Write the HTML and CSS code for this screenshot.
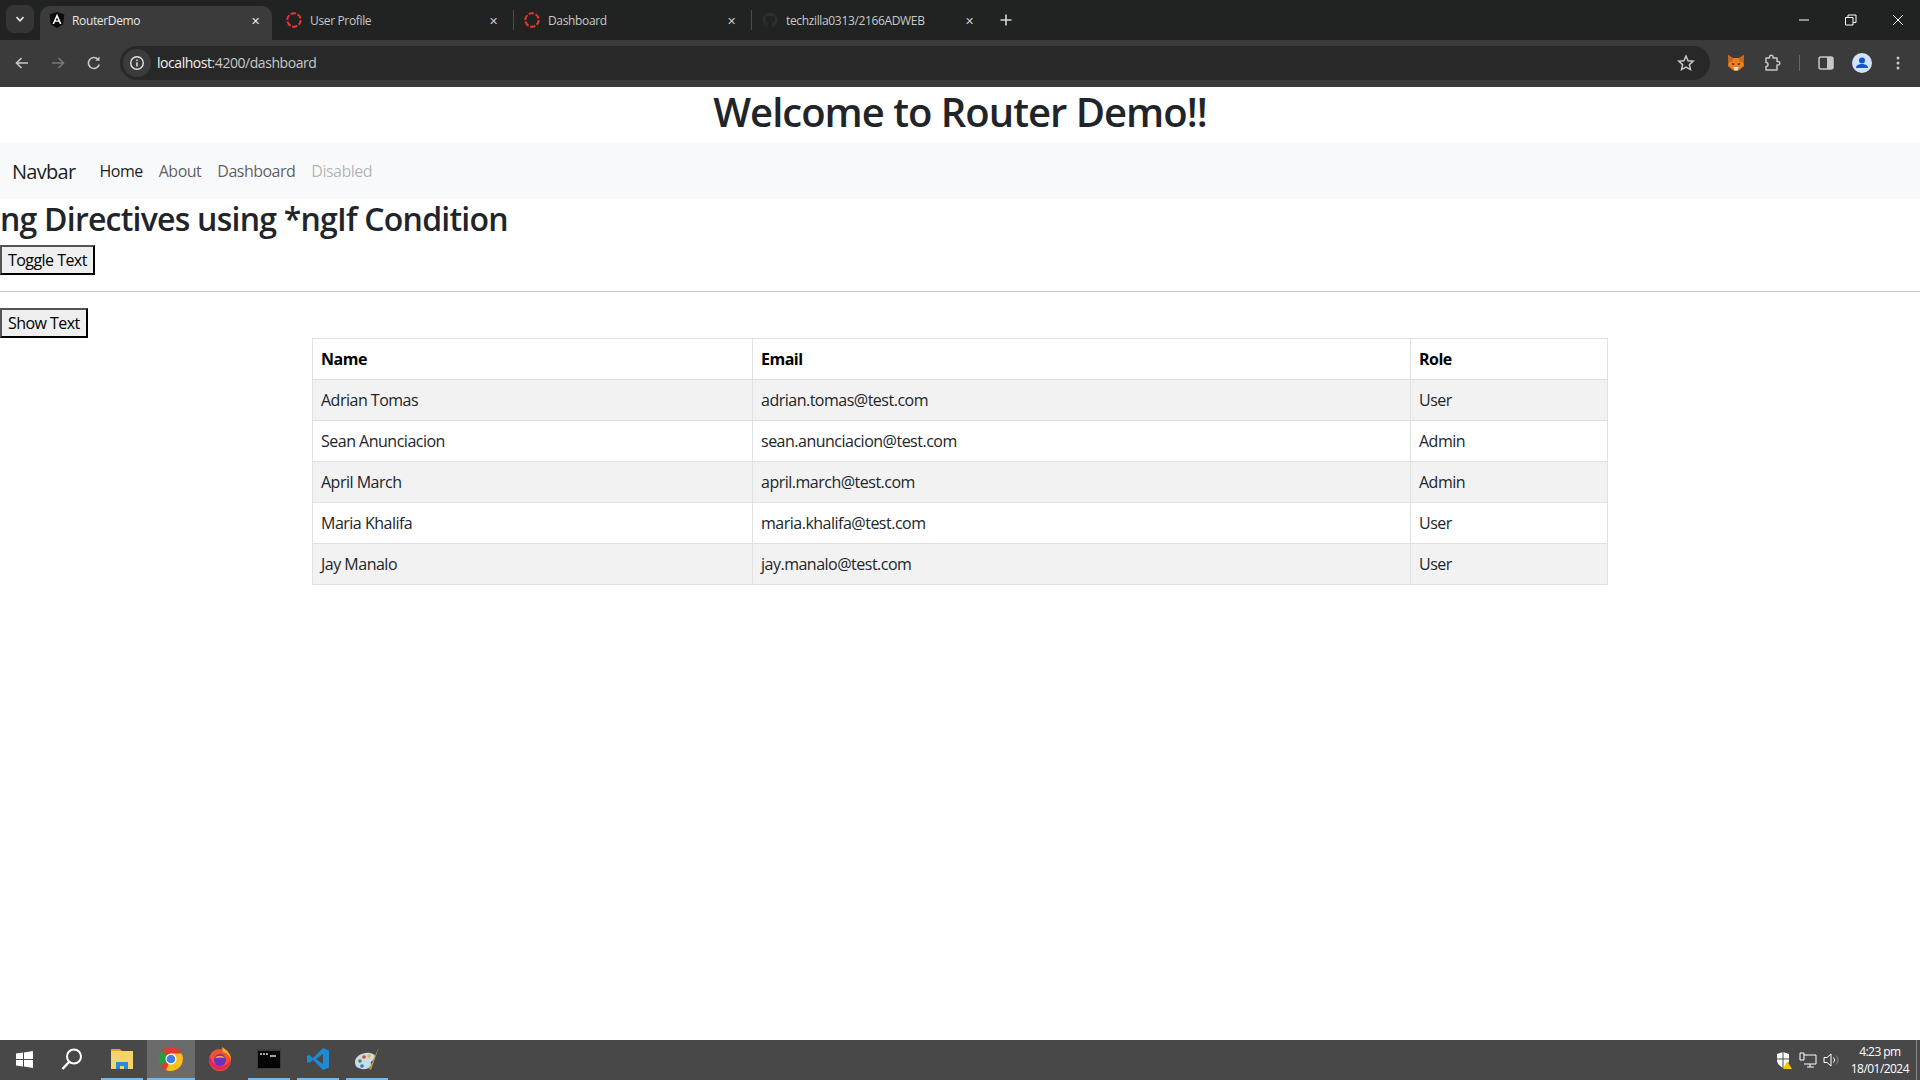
FILE: index.html
```html
<!DOCTYPE html>
<html lang="en">
<head>
    <meta charset="UTF-8">
    <title>RouterDemo</title>
    <link rel="stylesheet" href="styles.css">
</head>
<body>
    <!-- browser tabs -->
    <div class="tab_strip">
        <div class="tab_search">
            <svg width="12" height="12" viewBox="0 0 12 12"><path d="M2.500 4.200 6 7.800l3.500-3.600" fill="none" stroke="#e3e3e3" stroke-width="1.700"/></svg>
        </div>
        <div class="tab tab_active">
            <svg class="favicon" viewBox="0 0 16 16"><path d="M8 0 .7 2.600l1.100 9.700L8 16l6.200-3.700 1.100-9.700z" fill="#0b0b0f"/><path d="M8 1.800 3.500 12h1.700l.9-2.300h3.800l.9 2.300h1.700zm0 3.700 1.300 3H6.700z" fill="#fff"/></svg>
            <span class="tab_title">RouterDemo</span>
            <span class="tab_close">✕</span>
        </div>
        <div class="tab tab_second">
            <svg class="favicon" viewBox="0 0 16 16"><circle cx="8" cy="8" r="6.700" fill="none" stroke="#e8372c" stroke-width="2" stroke-dasharray="5.300 1.700"/></svg>
            <span class="tab_title">User Profile</span>
            <span class="tab_close">✕</span>
        </div>
        <div class="tab tab_divided">
            <svg class="favicon" viewBox="0 0 16 16"><circle cx="8" cy="8" r="6.700" fill="none" stroke="#e8372c" stroke-width="2" stroke-dasharray="5.300 1.700"/></svg>
            <span class="tab_title">Dashboard</span>
            <span class="tab_close">✕</span>
        </div>
        <div class="tab tab_divided">
            <svg class="favicon" viewBox="0 0 16 16"><path d="M8 .5a7.500 7.500 0 0 0-2.400 14.600c.4.100.5-.2.5-.4v-1.300c-2.100.4-2.600-1-2.600-1-.4-.9-.9-1.200-.9-1.200-.7-.5.100-.5.100-.5.800.100 1.200.8 1.200.8.700 1.200 1.800.9 2.200.7.100-.5.300-.9.500-1.100-1.700-.2-3.400-.8-3.400-3.700 0-.8.300-1.500.8-2-.1-.2-.3-1 .1-2 0 0 .6-.2 2.100.8a7 7 0 0 1 3.800 0c1.500-1 2.100-.8 2.100-.8.400 1 .2 1.800.1 2 .5.500.8 1.200.8 2 0 2.900-1.800 3.500-3.400 3.700.3.200.5.700.5 1.400v2.100c0 .2.100.5.500.4A7.500 7.500 0 0 0 8 .5z" fill="#2a2f36"/></svg>
            <span class="tab_title">techzilla0313/2166ADWEB</span>
            <span class="tab_close">✕</span>
        </div>
        <div class="new_tab">
            <svg width="14" height="14" viewBox="0 0 14 14"><path d="M7 1.500v11M1.500 7h11" stroke="#d5d5d5" stroke-width="1.600"/></svg>
        </div>
        <div class="window_controls">
            <svg width="12" height="12" viewBox="0 0 12 12"><path d="M1 6h10" stroke="#fff"/></svg>
            <svg width="12" height="12" viewBox="0 0 12 12"><path d="M.5 3.500h7.500v7.500H.5zM3 3.500V1h8v7.500H8" fill="none" stroke="#fff"/></svg>
            <svg width="12" height="12" viewBox="0 0 12 12"><path d="M1 1l10 10M11 1 1 11" stroke="#fff"/></svg>
        </div>
    </div>

    <!-- address bar -->
    <div class="toolbar">
        <svg class="tool_icon" viewBox="0 0 16 16"><path d="M14 8H3M7.500 3 2.500 8l5 5" fill="none" stroke="#c7c7c7" stroke-width="1.600"/></svg>
        <svg class="tool_icon" viewBox="0 0 16 16"><path d="M2 8h11M8.500 3l5 5-5 5" fill="none" stroke="#777" stroke-width="1.600"/></svg>
        <svg class="tool_icon" viewBox="0 0 16 16"><path d="M13.200 9.500A5.500 5.500 0 1 1 12 4.300" fill="none" stroke="#c7c7c7" stroke-width="1.600"/><path d="M13.500 1.500v4.300H9.200z" fill="#c7c7c7"/></svg>
        <div class="url_bar">
            <span class="site_info">
                <svg width="16" height="16" viewBox="0 0 16 16"><circle cx="8" cy="8" r="6.300" fill="none" stroke="#e3e3e3" stroke-width="1.400"/><path d="M8 7.200v4.300M8 4.400v1.500" stroke="#e3e3e3" stroke-width="1.500"/></svg>
            </span>
            <span class="url_text"><span class="url_host">localhost</span>:4200/dashboard</span>
            <svg class="star" width="18" height="18" viewBox="0 0 18 18"><path d="m9 2 2.100 4.700 5.100.5-3.800 3.400 1.100 5L9 13l-4.500 2.600 1.100-5-3.800-3.400 5.100-.5z" fill="none" stroke="#c7c7c7" stroke-width="1.500"/></svg>
        </div>
        <div class="extensions">
            <svg width="18" height="18" viewBox="0 0 18 18"><path d="M1 1l5 3h6l5-3-.5 7 .5 4-3.500 3-2.500 1.500H7L4.500 15 1 12l.5-4z" fill="#ef7f1f"/><path d="M1 1l5 3-.5 3.500-4 .5zM17 1l-5 3 .5 3.500 4 .5z" fill="#c9651a"/><path d="M6.500 13h5L10.500 16.500h-3z" fill="#f3e2d0"/><path d="M5 9l2.500.8L6 11.500zM13 9l-2.500.8L12 11.500z" fill="#2b2118"/></svg>
            <svg width="18" height="18" viewBox="0 0 18 18"><path d="M3 4h3.500V3a1.800 1.800 0 0 1 3.600 0v1H14v3.500h1a1.800 1.800 0 0 1 0 3.600h-1V16H3v-3.500a2 2 0 0 0 0-4z" fill="none" stroke="#c7c7c7" stroke-width="1.500" stroke-linejoin="round"/></svg>
            <span class="tool_divider"></span>
            <svg width="16" height="16" viewBox="0 0 16 16"><rect x="1" y="2" width="14" height="12" rx="2" fill="none" stroke="#c7c7c7" stroke-width="1.500"/><rect x="9" y="2" width="6" height="12" fill="#c7c7c7"/></svg>
            <svg width="20" height="20" viewBox="0 0 20 20"><circle cx="10" cy="10" r="10" fill="#d3e3fd"/><circle cx="10" cy="7.500" r="3" fill="#0b57d0"/><path d="M4 15c0-3 3-4 6-4s6 1 6 4z" fill="#0b57d0"/></svg>
            <svg width="16" height="16" viewBox="0 0 16 16"><circle cx="8" cy="3" r="1.500" fill="#c7c7c7"/><circle cx="8" cy="8" r="1.500" fill="#c7c7c7"/><circle cx="8" cy="13" r="1.500" fill="#c7c7c7"/></svg>
        </div>
    </div>

    <!-- the app itself -->
    <main class="page">
        <h1>Welcome to Router Demo!!</h1>
        <nav class="navbar">
            <a class="navbar_brand">Navbar</a>
            <a class="nav_link nav_active">Home</a>
            <a class="nav_link">About</a>
            <a class="nav_link">Dashboard</a>
            <a class="nav_link nav_disabled">Disabled</a>
        </nav>
        <h2>ng Directives using *ngIf Condition</h2>
        <button>Toggle Text</button>
        <hr>
        <button>Show Text</button>
        <div class="table_wrap">
            <table>
                <thead>
                    <tr>
                        <th class="col_name">Name</th>
                        <th class="col_email">Email</th>
                        <th>Role</th>
                    </tr>
                </thead>
                <tbody>
                    <tr><td>Adrian Tomas</td><td>adrian.tomas@test.com</td><td>User</td></tr>
                    <tr><td>Sean Anunciacion</td><td>sean.anunciacion@test.com</td><td>Admin</td></tr>
                    <tr><td>April March</td><td>april.march@test.com</td><td>Admin</td></tr>
                    <tr><td>Maria Khalifa</td><td>maria.khalifa@test.com</td><td>User</td></tr>
                    <tr><td>Jay Manalo</td><td>jay.manalo@test.com</td><td>User</td></tr>
                </tbody>
            </table>
        </div>
    </main>

    <!-- windows taskbar -->
    <footer class="taskbar">
        <div class="task_item task_start">
            <svg width="17" height="17" viewBox="0 0 17 17"><path d="M0 2.500 7 1.500v6.500H0zM8 1.400 17 0v8H8zM0 9h7v6.500L0 14.500zM8 9h9v8l-9-1.400z" fill="#fff"/></svg>
        </div>
        <div class="task_item task_search">
            <svg width="24" height="24" viewBox="0 0 24 24"><circle cx="14" cy="9.500" r="7" fill="none" stroke="#fff" stroke-width="2"/><path d="M9 15 2.500 22" stroke="#fff" stroke-width="2.400"/></svg>
        </div>
        <div class="task_item task_open task_explorer">
            <svg width="24" height="22" viewBox="0 0 24 22"><path d="M1 1h9l2 2H1z" fill="#e0a526"/><rect x="1" y="3" width="22" height="18" fill="#f7d36b"/><path d="M6 21v-7h12v7h-4v-3h-4v3z" fill="#2a8ad4"/></svg>
        </div>
        <div class="task_item task_active">
            <svg width="24" height="24" viewBox="0 0 24 24"><circle cx="12" cy="12" r="12" fill="#dd3b31"/><path d="M12 12 1.600 18A12 12 0 0 1 3 4z" fill="#1fa045"/><path d="M12 12h11.900A12 12 0 0 1 7 23z" fill="#f6c21a"/><path d="M12 6.500h10.600A12 12 0 0 1 24 12H12z" fill="#f6c21a"/><circle cx="12" cy="12" r="5.500" fill="#fff"/><circle cx="12" cy="12" r="4.300" fill="#3d7fe6"/></svg>
        </div>
        <div class="task_item">
            <svg width="24" height="24" viewBox="0 0 24 24"><circle cx="12" cy="13" r="11" fill="#f0542d"/><path d="M14 0c5 3 9 7 9 13-1-4-4-7-8-8z" fill="#ffb01f"/><path d="M2 8c1 8 7 12 13 11 4-1 7-4 8-7 0 6-5 11-11 11S1 18 1 12z" fill="#e3265a"/><circle cx="12" cy="13" r="6" fill="#6f2fbd"/><path d="M7 11c3-3 7-3 10 0-3-1-6-.5-10 0z" fill="#ffb01f"/></svg>
        </div>
        <div class="task_item task_open">
            <svg width="24" height="20" viewBox="0 0 24 20"><rect width="24" height="20" fill="#3d3d3d"/><rect x="1" y="2" width="22" height="17" fill="#050505"/><path d="M3 5h2M6 5h2M9 5h2M13 7h6" stroke="#d8d8d8" stroke-width="1.400"/></svg>
        </div>
        <div class="task_item task_open">
            <svg width="24" height="24" viewBox="0 0 24 24"><path d="M17 1 7 11 3 8 1 9v6l2 1 4-3 10 10 6-2.500V3.500z" fill="#1f8ad2"/><path d="M17 7v10l-7-5z" fill="#484848"/></svg>
        </div>
        <div class="task_item task_open">
            <svg width="26" height="26" viewBox="0 0 26 26"><path d="M1 16c0-6 8-10 15-9 5 1 6 3 4 6s-4 2-3 5-4 6-9 5-7-3-7-7z" fill="#c7dbe8"/><circle cx="6" cy="15" r="1.800" fill="#3a8c3f"/><circle cx="10" cy="11" r="1.800" fill="#d8452f"/><circle cx="15" cy="10" r="1.800" fill="#e8b23a"/><circle cx="8" cy="20" r="1.800" fill="#3578c8"/><path d="M25 1 17 24l-2-1z" fill="#c2923c"/></svg>
        </div>
        <div class="tray">
            <svg width="18" height="18" viewBox="0 0 18 18"><path d="M8 1 2 3v6c0 4 3 6 6 8 3-2 6-4 6-8V3z" fill="#fff"/><path d="M8 1v16M2 8h12" stroke="#484848"/><path d="M12 10l5 8H8z" fill="#f6c21a"/></svg>
            <svg width="18" height="16" viewBox="0 0 18 16"><path d="M1 1h4v7H1zM5 3h12v9H5M8 15h7M11 12v3" fill="none" stroke="#fff"/></svg>
            <svg width="17" height="16" viewBox="0 0 17 16"><path d="M1 5.500h3L8 2v12l-4-3.500H1z" fill="none" stroke="#fff"/><path d="M10.500 5.500a3.500 3.500 0 0 1 0 5" fill="none" stroke="#fff"/><path d="M13 3.500a6 6 0 0 1 0 9" fill="none" stroke="#888"/></svg>
            <div class="clock">
                <span>4:23 pm</span>
                <span>18/01/2024</span>
            </div>
            <span class="show_desktop"></span>
        </div>
    </footer>
</body>
</html>
```

FILE: styles.css
```css
* {
    box-sizing: border-box;
}

body {
    font-family: "Open Sans", "Noto Sans", sans-serif;
    display: flex;
    flex-direction: column;
    height: 100vh;
    margin: 0;
    overflow: hidden;
    background: #fff;
    color: #212529;
}

/* tab strip */
.tab_strip {
    display: flex;
    align-items: flex-end;
    height: 40px;
    flex-shrink: 0;
    background: #202322;
    color: #c9c9c9;
    font-size: 12px;
}

.tab_search {
    display: flex;
    align-items: center;
    justify-content: center;
    width: 28px;
    height: 28px;
    margin: 0 6px 7px 6px;
    border-radius: 8px;
    background: #353535;
}

.tab {
    display: flex;
    align-items: center;
    width: 238px;
    height: 34px;
    padding: 0 11px 6px 11px;
    position: relative;
}

.tab_second {
    width: 241px;
    padding-left: 14px;
}

.tab_active {
    width: 232px;
    padding: 0 8px 6px 9px;
    border-radius: 10px 10px 0 0;
    background: #3b3b3b;
    color: #e6e6e6;
}

.tab_divided::before {
    content: "";
    position: absolute;
    left: 0;
    top: 4px;
    width: 1px;
    height: 20px;
    background: #4a4a4a;
}

.favicon {
    width: 16px;
    height: 16px;
    margin-right: 8px;
    flex-shrink: 0;
}

.tab_active .favicon {
    margin-right: 7px;
}

.tab_title {
    flex: 1;
    letter-spacing: -0.35px;
    white-space: nowrap;
}

.tab_close {
    font-size: 11px;
    width: 16px;
    margin-right: 1px;
    text-align: center;
}

.new_tab {
    display: flex;
    align-items: center;
    margin: 0 0 13px 10px;
}

.window_controls {
    display: flex;
    gap: 35px;
    align-self: center;
    margin-left: auto;
    margin-right: 16px;
}

/* address bar */
.toolbar {
    display: flex;
    align-items: center;
    height: 47px;
    flex-shrink: 0;
    padding: 0 0 1px 14px;
    gap: 20px;
    background: #3b3b3b;
}

.tool_icon {
    width: 16px;
    height: 16px;
    flex-shrink: 0;
}

.url_bar {
    display: flex;
    align-items: center;
    width: 1590px;
    height: 34px;
    margin-left: -2px;
    padding: 0 0 1px 3px;
    border-radius: 17px;
    background: #282828;
    color: #c9c9c9;
    font-size: 14px;
}

.site_info {
    display: flex;
    align-items: center;
    justify-content: center;
    width: 28px;
    height: 28px;
    margin-right: 6px;
    border-radius: 50%;
    background: #3b3b3b;
}

.url_text {
    flex: 1;
    letter-spacing: -0.45px;
}

.url_host {
    color: #f1f1f1;
}

.star {
    margin-right: 15px;
}

.extensions {
    display: flex;
    align-items: center;
    gap: 18px;
    margin-left: -3px;
}

.tool_divider {
    width: 1px;
    height: 16px;
    background: #666;
}

/* page */
.page {
    flex: 1;
    min-height: 0;
}

h1 {
    margin: 0 0 7px;
    padding-top: 1px;
    font-size: 40px;
    font-weight: 600;
    line-height: 1.2;
    letter-spacing: -1px;
    text-align: center;
}

h2 {
    margin: 0 0 7px;
    padding-top: 1px;
    font-size: 32px;
    font-weight: 600;
    line-height: 1.2;
    letter-spacing: -0.77px;
}

.navbar {
    display: flex;
    align-items: center;
    height: 56px;
    padding: 0 12px;
    background: #f8f9fa;
}

.navbar_brand {
    margin-right: 16px;
    font-size: 20px;
    letter-spacing: -0.7px;
    color: #1c1f23;
}

.nav_link {
    padding: 8px;
    font-size: 16px;
    letter-spacing: -0.5px;
    color: rgba(0, 0, 0, 0.65);
}

.nav_active {
    color: rgba(0, 0, 0, 0.9);
}

.nav_disabled {
    color: rgba(0, 0, 0, 0.3);
}

button {
    display: block;
    height: 30px;
    padding: 1px 6px;
    border: 2px outset #000;
    background: #efefef;
    color: #000;
    font-family: inherit;
    font-size: 16px;
    letter-spacing: -0.55px;
}

hr {
    margin: 16px 0;
    border: 0;
    border-top: 1px solid #c8c9ca;
}

.table_wrap {
    width: 1296px;
    margin: 0 auto;
}

table {
    width: 100%;
    border-collapse: collapse;
    table-layout: fixed;
    font-size: 16px;
    letter-spacing: -0.5px;
}

th,
td {
    height: 41px;
    padding: 8px;
    border: 1px solid #dee2e6;
    line-height: 24px;
    text-align: left;
    vertical-align: top;
}

th {
    color: #000;
}

.col_name {
    width: 440px;
}

.col_email {
    width: 658px;
}

tbody tr:nth-child(odd) {
    background: #f2f2f2;
}

/* taskbar */
.taskbar {
    display: flex;
    align-items: stretch;
    height: 40px;
    flex-shrink: 0;
    background: #484848;
    color: #fff;
}

.task_item {
    display: flex;
    align-items: center;
    justify-content: center;
    width: 48px;
    border-bottom: 2px solid transparent;
    margin-right: 1px;
}

.task_start {
    margin-right: 0;
}

.task_search {
    margin-right: 2px;
}

.task_open {
    border-image: linear-gradient(90deg, transparent 4px, #76b9ed 4px, #76b9ed 44px, transparent 44px) 1;
}

.task_active {
    background: #6b6b6b;
    border-bottom-color: #76b9ed;
}

.tray {
    display: flex;
    align-items: center;
    gap: 6px;
    margin-left: auto;
}

.clock {
    display: flex;
    flex-direction: column;
    align-items: center;
    margin-left: 5px;
    font-size: 12px;
    line-height: 17px;
    letter-spacing: -0.55px;
}

.show_desktop {
    width: 1px;
    height: 100%;
    margin-left: 1px;
    margin-right: 3px;
    background: #888;
}
```
